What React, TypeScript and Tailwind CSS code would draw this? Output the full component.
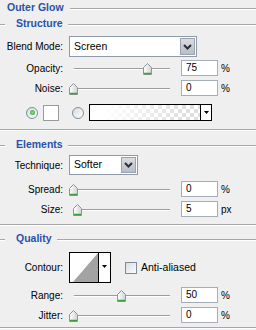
import type { ReactNode } from "react";

const LABEL_W = "w-[63px]";

function Etched({ className = "" }: { className?: string }) {
  return <div className={`h-[2px] border-t border-[#a7a7a7] border-b border-b-white ${className}`} />;
}

function GroupHeader({ title, outer = false }: { title: string; outer?: boolean }) {
  return (
    <div className="flex items-center h-4">
      {outer ? (
        <span className="pl-[7px] pr-[6px] font-bold text-[10.5px] text-[#2b52a8]">{title}</span>
      ) : (
        <>
          <Etched className="w-[5px] mt-[1px]" />
          <span className="ml-[11px] pr-[5px] font-bold text-[10.5px] text-[#2b52a8]">{title}</span>
        </>
      )}
      <Etched className="flex-1 mt-[1px]" />
    </div>
  );
}

function Label({ children }: { children: ReactNode }) {
  return <div className={`${LABEL_W} shrink-0 text-right`}>{children}</div>;
}

function Thumb() {
  return (
    <svg width="9" height="12" viewBox="0 0 9 12">
      <defs>
        <linearGradient id="tg" x1="0" y1="0" x2="1" y2="0">
          <stop offset="0" stopColor="#ffffff" />
          <stop offset="1" stopColor="#cfd3d6" />
        </linearGradient>
      </defs>
      <path d="M0.5 4.5 L4.5 0.5 L8.5 4.5 V11.5 H0.5 Z" fill="url(#tg)" stroke="#8e9599" />
      <path d="M1 10.5 H8" stroke="#39a33a" strokeWidth="1.5" />
    </svg>
  );
}

function Slider({ pos }: { pos: number }) {
  return (
    <div className="relative w-[103px] h-full shrink-0 ml-[6px]">
      <div className="absolute left-[4px] right-[2px] top-[10px] h-[2px] border-t border-[#9d9d9d] border-b border-b-white rounded-tl-[2px]" />
      <div className="absolute top-[5px]" style={{ left: pos }}>
        <Thumb />
      </div>
    </div>
  );
}

function NumBox({ value }: { value: string }) {
  return (
    <div className="ml-[9px] w-[37px] h-[16px] bg-white border border-[#a4adb8] pl-[4px] flex items-center leading-none">
      {value}
    </div>
  );
}

function SliderRow({ label, pos, value, unit }: { label: string; pos: number; value: string; unit: string }) {
  return (
    <div className="flex items-center h-5">
      <Label>{label}</Label>
      <Slider pos={pos} />
      <NumBox value={value} />
      <span className="ml-[3px]">{unit}</span>
    </div>
  );
}

function Chevron() {
  return (
    <svg width="9" height="6" viewBox="0 0 9 6">
      <path d="M1 1 L4.5 4.5 L8 1" fill="none" stroke="#2c2f36" strokeWidth="2" />
    </svg>
  );
}

function Select({ value, width }: { value: string; width: string }) {
  return (
    <div className={`ml-[6px] ${width} h-full bg-white border border-[#8f9aa8] flex items-stretch p-[1px]`}>
      <span className="flex-1 pl-[3px] flex items-center text-[10.5px]">{value}</span>
      <div className="w-[15px] bg-[linear-gradient(#d9dce1,#b9bdc5)] border border-[#9aa2ae] flex items-center justify-center">
        <Chevron />
      </div>
    </div>
  );
}

function Radio({ checked }: { checked?: boolean }) {
  return (
    <div className="w-[12px] h-[12px] rounded-full border border-[#7c8da0] bg-[linear-gradient(135deg,#d6d9dc,#ffffff)] flex items-center justify-center">
      {checked && <div className="w-[5px] h-[5px] rounded-full bg-[radial-gradient(circle,#8be08b,#2f9a2f)]" />}
    </div>
  );
}

function DownTri() {
  return (
    <svg width="5" height="3" viewBox="0 0 5 3">
      <path d="M0 0 H5 L2.5 3 Z" fill="#000" />
    </svg>
  );
}

export default function App() {
  return (
    <div className="w-[256px] h-[330px] overflow-hidden bg-[#efefef] text-black text-[10px] font-['Liberation_Sans',Arial,sans-serif]">
      <GroupHeader title="Outer Glow" outer />
      <GroupHeader title="Structure" />

      <div className="flex items-center h-[21px] mt-1">
        <Label>Blend Mode:</Label>
        <Select value="Screen" width="w-[128px]" />
      </div>
      <div className="mt-[1px]">
        <SliderRow label="Opacity:" pos={74} value="75" unit="%" />
        <SliderRow label="Noise:" pos={0} value="0" unit="%" />
      </div>

      <div className="flex items-center h-[17px] mt-[6px] pl-[26px]">
        <Radio checked />
        <div className="ml-[5px] w-[16px] h-[16px] bg-white border border-[#9a9a9a]" />
        <div className="ml-[13px]">
          <Radio />
        </div>
        <div className="ml-[5px] w-[123px] h-full border border-black flex bg-white">
          <div className="flex-1 bg-[linear-gradient(to_right,#ffffff_10%,rgba(255,255,255,0.3)_85%),repeating-conic-gradient(#d2d2d2_0_25%,#ffffff_0_50%)] bg-[length:100%_100%,8px_8px]" />
          <div className="w-[11px] border-l border-black flex items-center justify-center">
            <DownTri />
          </div>
        </div>
      </div>

      <Etched className="mt-2" />

      <div className="mt-[6px]">
        <GroupHeader title="Elements" />
      </div>
      <div className="flex items-center h-5 mt-[2px]">
        <Label>Technique:</Label>
        <Select value="Softer" width="w-[69px]" />
      </div>
      <div className="mt-[4px]">
        <SliderRow label="Spread:" pos={0} value="0" unit="%" />
        <SliderRow label="Size:" pos={4} value="5" unit="px" />
      </div>

      <Etched className="mt-[5px]" />

      <div className="mt-[5px]">
        <GroupHeader title="Quality" />
      </div>
      <div className="flex items-center h-[31px] mt-[5px]">
        <Label>Contour:</Label>
        <div className="ml-[6px] w-[42px] h-full border border-black bg-white flex">
          <svg width="28" height="29" viewBox="0 0 28 29" className="shrink-0">
            <polygon points="3,29 28,0 28,29" fill="#a3a3a3" />
          </svg>
          <div className="flex-1 border-l border-black flex items-center justify-center pb-[3px]">
            <DownTri />
          </div>
        </div>
        <div className="ml-[14px] w-[12px] h-[12px] border border-[#7c8a9c] bg-[linear-gradient(135deg,#d9dde2,#fbfcfd)]" />
        <span className="ml-[4px] text-[10.5px]">Anti-aliased</span>
      </div>
      <div className="mt-[2px]">
        <SliderRow label="Range:" pos={48} value="50" unit="%" />
        <SliderRow label="Jitter:" pos={0} value="0" unit="%" />
      </div>
      <Etched className="mt-[2px]" />
    </div>
  );
}
